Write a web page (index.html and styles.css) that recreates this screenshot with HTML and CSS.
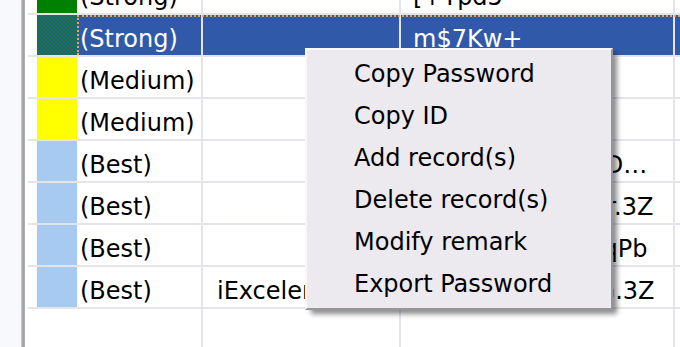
FILE: index.html
```html
<!DOCTYPE html>
<html lang="en">
<head>
<meta charset="UTF-8" />
<title>Password List</title>
<link rel="stylesheet" href="styles.css">
</head>
<body>

<div class="pane">
  <div class="gutter"></div>
  <div class="edge"></div>
  <div class="grid">
    <div class="row">
      <div class="pad"></div>
      <div class="swatch strong"></div>
      <div class="cell c1">(Strong)</div>
      <div class="cell c2"></div>
      <div class="cell c3">[+Tpd5</div>
      <div class="cell c4"></div>
    </div>
    <div class="row sel">
      <div class="pad"></div>
      <div class="swatch strong"></div>
      <div class="cell c1">(Strong)</div>
      <div class="cell c2"></div>
      <div class="cell c3">m$7Kw+</div>
      <div class="cell c4"></div>
    </div>
    <div class="row">
      <div class="pad"></div>
      <div class="swatch medium"></div>
      <div class="cell c1">(Medium)</div>
      <div class="cell c2"></div>
      <div class="cell c3">Qe4!tB</div>
      <div class="cell c4"></div>
    </div>
    <div class="row">
      <div class="pad"></div>
      <div class="swatch medium"></div>
      <div class="cell c1">(Medium)</div>
      <div class="cell c2"></div>
      <div class="cell c3">z9Hn#r</div>
      <div class="cell c4"></div>
    </div>
    <div class="row">
      <div class="pad"></div>
      <div class="swatch best"></div>
      <div class="cell c1">(Best)</div>
      <div class="cell c2"></div>
      <div class="cell c3">Jx6$eTq4HcY#kDmW8pz</div>
      <div class="cell c4"></div>
    </div>
    <div class="row">
      <div class="pad"></div>
      <div class="swatch best"></div>
      <div class="cell c1">(Best)</div>
      <div class="cell c2"></div>
      <div class="cell c3">Wq8#Ln2vKda7r.3Z</div>
      <div class="cell c4"></div>
    </div>
    <div class="row">
      <div class="pad"></div>
      <div class="swatch best"></div>
      <div class="cell c1">(Best)</div>
      <div class="cell c2"></div>
      <div class="cell c3">Rv3!%kZ8sNw2qPb</div>
      <div class="cell c4"></div>
    </div>
    <div class="row">
      <div class="pad"></div>
      <div class="swatch best"></div>
      <div class="cell c1">(Best)</div>
      <div class="cell c2">iExcelerate</div>
      <div class="cell c3">Ht5@xQm9pEoG.3Z</div>
      <div class="cell c4"></div>
    </div>
    <div class="row filler">
      <div class="pad"></div>
      <div></div>
      <div class="cell c1"></div>
      <div class="cell c2"></div>
      <div class="cell c3"></div>
      <div class="cell c4"></div>
    </div>
  </div>
</div>

<ul class="menu">
  <li>Copy Password</li>
  <li>Copy ID</li>
  <li>Add record(s)</li>
  <li>Delete record(s)</li>
  <li>Modify remark</li>
  <li>Export Password</li>
</ul>

</body>
</html>
```

FILE: styles.css
```css
body {
  margin: 0;
  height: 347px;
  overflow: hidden;
  font-family: "DejaVu Sans", Verdana, sans-serif;
  font-size: 24px;
  color: #000;
  background: #fff;
}
.pane {
  display: flex;
  height: 347px;
}
.gutter {
  width: 21px;
  background-color: #f8f9fd;
}
.edge {
  width: 4px;
  background: linear-gradient(to right, #cfcfd2, #9c9ca2 50%, #b4b4b8);
}
.grid {
  flex: 1;
  display: flex;
  flex-direction: column;
  overflow: hidden;
}
.row {
  display: grid;
  grid-template-columns: 9px 40px 126px 198px 274px 1fr;
  margin-left: 3px;
  border-bottom: 2px solid #e4e5eb;
  position: relative;
}
.row:first-child {
  margin-top: -27px;
}
.cell {
  height: 40px;
  line-height: 48px;
  white-space: nowrap;
  overflow: hidden;
  box-sizing: border-box;
}
.c1, .c2, .c3 {
  border-right: 2px solid #e4e5eb;
}
.c1 {
  padding-left: 3px;
}
.c2 {
  padding-left: 14px;
}
.c3 {
  padding-left: 12px;
  padding-right: 8px;
  text-overflow: ellipsis;
}
.swatch {
  height: 40px;
}
.strong {
  background-color: #008000;
}
.medium {
  background-color: #ffff00;
}
.best {
  background-color: #a6caf0;
}

/* selected row */
.sel .cell {
  background-color: #3059a9;
  color: #fff;
}
.sel .strong {
  background: repeating-conic-gradient(#0d7a1c 0 25%, #2f5aa8 0 50%) 0 0 / 4px 4px;
}
.sel::after {
  content: "";
  position: absolute;
  left: 49px;
  right: 0;
  top: 0;
  height: 40px;
  border-top: 2px dotted #e2a94a;
  border-left: 2px dotted #e2a94a;
  box-sizing: border-box;
}

.filler {
  flex: 1;
  border-bottom: none;
}
.filler .cell {
  height: auto;
}

/* context menu */
.menu {
  position: absolute;
  left: 305px;
  top: 48px;
  width: 308px;
  height: 262px;
  box-sizing: border-box;
  margin: 0;
  padding: 3px 0;
  list-style: none;
  background-color: #ece9ef;
  border: 2px solid;
  border-color: #f9f8fb #96949c #96949c #f9f8fb;
  box-shadow: 5px 5px 5px -1px rgba(0, 0, 0, 0.45);
}
.menu li {
  height: 42px;
  line-height: 42px;
  padding-left: 47px;
  white-space: nowrap;
}
```
